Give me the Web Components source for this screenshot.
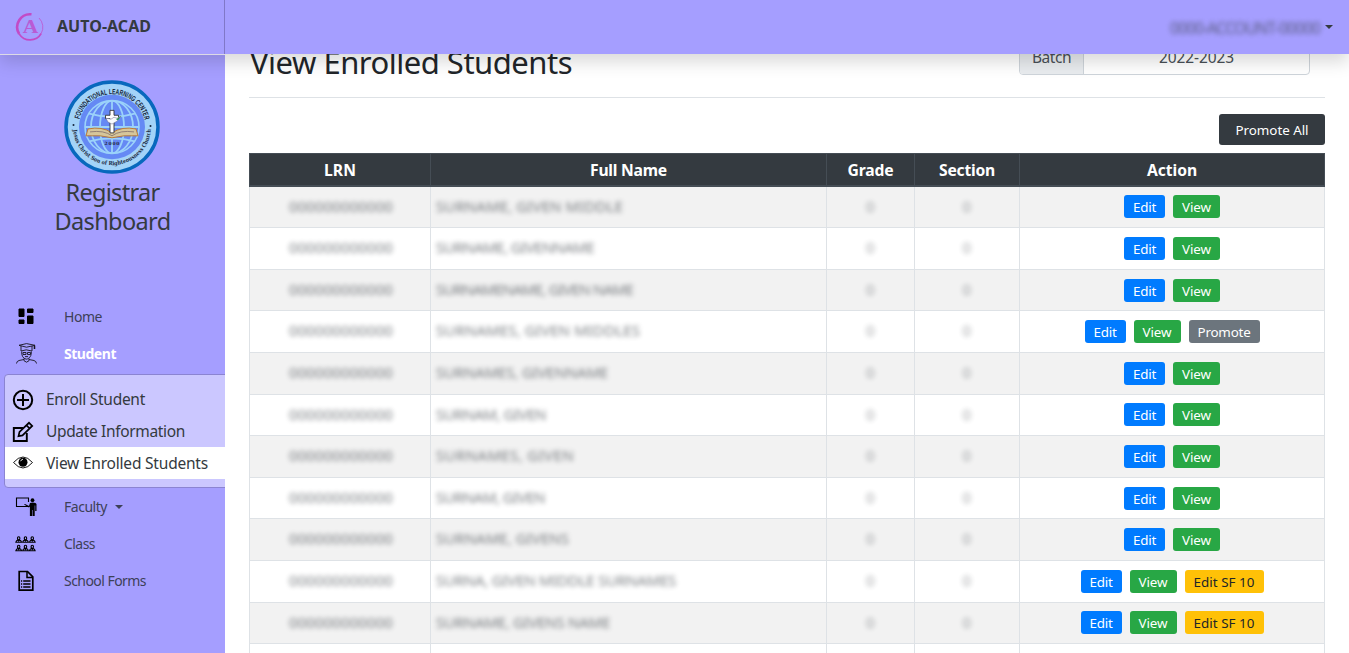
<!DOCTYPE html>
<html lang="en">
<head>
<meta charset="utf-8">
<title>AUTO-ACAD - View Enrolled Students</title>
<style>
html,body{margin:0;height:100%;overflow:hidden;background:#fff}
body{font-family:"Noto Sans","Open Sans",sans-serif;font-size:16px;line-height:1.5;color:#212529}
</style>
</head>
<body>
<app-shell></app-shell>
<script>
function define(name, html, setup) {
  const tpl = document.createElement('template');
  tpl.innerHTML = html;
  customElements.define(name, class extends HTMLElement {
    connectedCallback() {
      if (this.shadowRoot) return;
      const root = this.attachShadow({ mode: 'open' });
      root.appendChild(tpl.content.cloneNode(true));
      if (setup) setup(this, root);
    }
  });
}

// Text run tracked to a given width (attribute w, px).
define('fit-text', `<style>
:host{display:inline-block;white-space:nowrap;text-align:left}
span{display:inline-block;white-space:pre}
:host([masked]){filter:blur(2.6px);color:#343a40;opacity:.65}
</style><span><slot></slot></span>`, (el, root) => {
  const w = parseFloat(el.getAttribute('w'));
  const s = root.querySelector('span');
  const n = el.textContent.length;
  s.style.letterSpacing = '0px';
  const natural = s.getBoundingClientRect().width;
  if (n && natural) s.style.letterSpacing = (w - natural) / n + 'px';
  el.style.width = w + 'px';
});

const ICONS = {
  home: `<path d="M4 3h5v7.500H4zM12.500 3H18v3.500h-5.500zM4 14h5v3.500H4zM12.500 10H18v7.500h-5.500z" fill="#000" stroke="#000" stroke-linejoin="round"/>`,
  student: `<g fill="none" stroke="#17151f" stroke-width=".9"><path d="M4 2.300 11.500 .6l8.500 1.700-8.500 1.900zM6 3v5q5-2.300 11 0V3M6.700 8.600c-.2 4 1.200 6.900 4.600 7.600 3.700-.7 5.200-3.600 5-7.600M8 9.500h3v2H8zM12.500 9.500h3v2h-3zM10 13.600h3M9 15.500v2.200l2.500 1.500 2.500-1.500v-2.200M9 16.500 4 17.500q-2.300.7-2.500 3M14 16.500l5 1q2.300.7 2.500 3"/><path d="M19.500 2.500v3.500" stroke-width="1.500"/></g>`,
  plus: `<g fill="none" stroke="#000" stroke-width="2"><circle cx="11" cy="11" r="9.200"/><path d="M11 5v12M5 11h12"/></g>`,
  edit: `<g fill="none" stroke="#000" stroke-width="1.900"><path d="M11 7H1.800v13h13v-8"/><path d="m6.500 15.200 1-4.200L17 1.800l3.200 3.100-9.700 9.500zM14.500 4.300l3.200 3.200" stroke-width="1.700"/></g>`,
  eye: `<g fill="none" stroke="#000"><path d="M1.500 10.500Q11-.5 20.500 10.500 11 21.500 1.500 10.500z" stroke-width=".9"/><circle cx="11" cy="10.200" r="4.500" fill="#000" stroke="none"/><path d="M8.700 9.200q.5-1.800 2.300-2" stroke="#fff" stroke-width=".9"/></g>`,
  faculty: `<path d="M13 10.500H1.500V2h12v4" fill="none" stroke="#000" stroke-width="1.100"/><circle cx="17.500" cy="4.200" r="1.900"/><path d="m10 8 4 2 1-3q2.500-.8 5.500 0l1 1v7h-1.300V9.500h-.5V20h-2v-6h-.5v6h-2.300v-9.500l-1 1L9 8.600z"/>`,
  group: `<defs><g id="p" fill="none" stroke="#000" stroke-width="1.100"><path d="M2.500 2.300q0-1.600 1.200-1.600t1.200 1.600-1.200 1.600-1.200-1.600zM.9 6.200q.3-1.500 1.900-2.200l.9.900.9-.9q1.600.7 1.900 2.200z"/></g></defs><use href="#p" y="3"/><use href="#p" x="6.800" y="3"/><use href="#p" x="13.600" y="3"/><use href="#p" y="11.500"/><use href="#p" x="6.800" y="11.500"/><use href="#p" x="13.600" y="11.500"/>`,
  doc: `<path d="M4.200 1.500h8.300l5.300 5.300v13.400H4.200z" fill="none" stroke="#000" stroke-width="1.700"/><path d="M12 2v5.500h5.500M6 11h1.200m1 0h7.300M6 14h1.200m1 0h7.300M6 17h1.200m1 0h7.300" fill="none" stroke="#000" stroke-width="1.500"/>`
};
define('app-icon', `<style>:host{display:block;width:22px;height:22px;flex:none}svg{display:block;width:22px;height:22px}</style><svg viewBox="0 0 22 22"></svg>`,
  (el, root) => { root.querySelector('svg').innerHTML = ICONS[el.getAttribute('name')]; });

function addIcon(el, root) {
  const icon = document.createElement('app-icon');
  icon.setAttribute('name', el.getAttribute('icon'));
  root.querySelector('.l').before(icon);
}

define('brand-mark', `<style>:host{display:block;width:30px;height:30px}svg{display:block}text{font:bold 18px "Liberation Serif",serif}</style>
<svg width="30" height="30" viewBox="0 0 30 30"><g fill="none" stroke="#c24bc6"><path d="M16.500 2.300A12.900 12.900 0 0 0 4.200 22" stroke-width="2.600"/><path d="M4.200 22A12.900 12.900 0 0 0 26.200 21.500" stroke-width="1.600"/><path d="M26.200 21.500A12.900 12.900 0 0 0 24 6" stroke-width=".7"/></g><text x="15.500" y="20.500" text-anchor="middle" fill="#b95bd4" textLength="15.500" lengthAdjust="spacingAndGlyphs">A</text></svg>`);

define('school-seal', `<style>:host{display:block;width:96px;height:94px}svg{display:block}</style>
<svg width="96" height="94" viewBox="0 0 96 96" preserveAspectRatio="none">
<defs><path id="top" d="M14.500 48a33.500 33.500 0 0 1 67 0"/><path id="bot" d="M9 48a39 39 0 0 0 78 0"/><clipPath id="c"><circle cx="48" cy="48" r="27"/></clipPath></defs>
<circle cx="48" cy="48" r="46" fill="#a3d3f8" stroke="#0868bd" stroke-width="3.500"/>
<circle cx="48" cy="48" r="33" fill="#6589f4"/>
<circle cx="48" cy="48" r="27" fill="#6589f4" stroke="#9bd2fa" stroke-width="1.600"/>
<g clip-path="url(#c)" fill="none" stroke="#9bd2fa" stroke-width="1.800"><path d="M48 20v56M20 48h56M24 34q24 7 48 0M24 63q24-7 48 0"/><ellipse cx="48" cy="48" rx="12" ry="27"/><ellipse cx="48" cy="48" rx="21" ry="27"/></g>
<path d="M24 50q14-3 24 4 10-7 24-4l2 7q-15-1-26 2-11-3-26-2z" fill="#d6c69a" stroke="#bb7c35" stroke-width="1"/>
<path d="M26 53q14-2 22 4 8-6 22-4" fill="none" stroke="#806d69" stroke-width=".8"/>
<path d="M46 31h4v5h4.500v3.500H50V54h-4V39.500h-4.500V36H46z" fill="#fff" stroke="#333" stroke-width=".9"/>
<path d="m42 39 5 1 3-2 3 1 4-2-4 5-5 3-4-2z" fill="#f7fafd" stroke="#668" stroke-width=".5"/><path d="m52 40 5-3-3 4z" fill="#269650"/>
<text x="48" y="66.500" text-anchor="middle" font-size="4.500" font-weight="700" font-family="DejaVu Serif,serif" textLength="15" fill="#26283d">2000</text>
<text font-family="Liberation Sans,sans-serif" font-size="7.800" font-weight="700" fill="#14233a"><textPath href="#top" startOffset="8" textLength="90" lengthAdjust="spacingAndGlyphs">FOUNDATIONAL LEARNING CENTER</textPath></text>
<text font-family="DejaVu Serif,serif" font-size="5.700" font-weight="700" fill="#1b2a42"><textPath href="#bot" startOffset="3" textLength="117" lengthAdjust="spacingAndGlyphs">Jesus Christ Son of Righteousness Church</textPath></text>
<circle cx="9.500" cy="46" r="1" fill="#14233a"/><circle cx="86.500" cy="47" r="1" fill="#14233a"/>
</svg>`);

define('drop-caret', `<style>:host{display:block;width:0;height:0;border:4.500px solid transparent;border-top-color:currentColor;border-bottom:0}</style>`);

define('top-bar', `<style>
:host{display:flex;justify-content:space-between;height:54px;background:#a59eff;box-shadow:0 8px 16px rgba(0,0,0,.15);position:relative;z-index:5;flex:none;color:#343a40}
.brand{display:flex;align-items:center;box-sizing:border-box;width:225px;padding-left:15px;gap:12px;border-right:1px solid #8078c8;font-weight:700;font-size:16px;box-shadow:0 1px 0 #dcdae6}
.brand fit-text{margin-top:-3px}
.user{display:flex;align-items:center;gap:5px;padding-right:16px;color:#343a40}
.user fit-text{margin-top:2px}
</style><div class="brand"><brand-mark></brand-mark><fit-text w="94">AUTO-ACAD</fit-text></div>
<div class="user"><fit-text masked w="150">0000-ACCOUNT-00000</fit-text><drop-caret></drop-caret></div>`);

define('nav-item', `<style>
:host{display:flex;align-items:center;height:37px;padding-left:15px;font-size:14px;color:#3d4058}
:host([active]){color:#fff;font-weight:700}
.l{margin-left:27px;display:flex;align-items:center;gap:8px}
</style><div class="l"><slot></slot></div>`, addIcon);

define('sub-item', `<style>
:host{display:flex;align-items:center;box-sizing:border-box;height:32px;padding:1px 0 0 7px;font-size:15.500px;color:#343a40}
.l{margin-left:12px;padding-top:1px}
:host([current]){background:#fff}
:host([current]) app-icon{margin-top:-1px}
</style><div class="l"><slot></slot></div>`, addIcon);

define('side-bar', `<style>
:host{display:block;box-sizing:border-box;width:225px;flex:none;background:#a59eff;overflow:hidden}
school-seal{margin:0 auto;position:relative;left:-.5px}
.title{display:flex;flex-direction:column;align-items:center;font-size:23.500px;line-height:29px;color:#343a40;padding-top:4px;height:124px;box-sizing:border-box}
.sub{margin:2px -6px 0 4px;padding:8px 0;background:#cbc7ff;border:1px solid #8b84d2;border-radius:4px}
</style>
<school-seal></school-seal>
<div class="title"><fit-text w="94">Registrar</fit-text><fit-text w="116">Dashboard</fit-text></div>
<nav>
<nav-item icon="home"><fit-text w="38">Home</fit-text></nav-item>
<nav-item icon="student" active><fit-text w="52">Student</fit-text></nav-item>
<div class="sub">
<sub-item icon="plus"><fit-text w="99">Enroll Student</fit-text></sub-item>
<sub-item icon="edit"><fit-text w="139">Update Information</fit-text></sub-item>
<sub-item icon="eye" current><fit-text w="162">View Enrolled Students</fit-text></sub-item>
</div>
<nav-item icon="faculty"><fit-text w="43">Faculty</fit-text><drop-caret></drop-caret></nav-item>
<nav-item icon="group"><fit-text w="31">Class</fit-text></nav-item>
<nav-item icon="doc"><fit-text w="82">School Forms</fit-text></nav-item>
</nav>`);

define('ui-button', `<style>
:host{display:flex;align-items:center;justify-content:center;box-sizing:border-box;height:23px;border-radius:3px;font-size:13.400px;line-height:21px;color:#fff;background:#007bff;padding-top:1px}
:host([kind=view]){background:#28a745}
:host([kind=promote]){background:#6c757d}
:host([kind=sf]){background:#ffc107;color:#212529}
:host([kind=dark]){background:#343a40;height:31px;padding-top:2px}
</style><slot></slot>`);

const BUTTONS = {
  edit: ['Edit', 41, 23], view: ['View', 47, 29], promote: ['Promote', 71, 53], sf: ['Edit SF 10', 79, 61]
};
const button = k => { const [t, w, tw] = BUTTONS[k]; return `<ui-button kind="${k}" style="width:${w}px"><fit-text w="${tw}">${t}</fit-text></ui-button>`; };

define('student-row', `<style>
:host{display:grid;grid-template-columns:181px 396px 88px 105px 306px;box-sizing:border-box;border-bottom:1px solid #dee2e6;font-size:15px;line-height:21px}
:host([odd]){background:#f2f2f2}
div{border-left:1px solid #dee2e6;text-align:center;padding-top:9px;overflow:hidden}
.n{text-align:left;padding-left:5px}
.l{padding-left:2px}
.a{display:flex;justify-content:center;align-items:flex-start;gap:8px;border-right:1px solid #dee2e6}
</style><div class="l"></div><div class="n"></div><div class="g"></div><div class="c"></div><div class="a"></div>`, (el, root) => {
  const [h, top, nw, name, acts] = el.data;
  const q = s => root.querySelector(s);
  el.style.height = h + 'px';
  q('.a').style.paddingTop = top + 'px';
  if (nw) {
    q('.l').innerHTML = '<fit-text masked w="104">000000000000</fit-text>';
    q('.n').innerHTML = `<fit-text masked w="${nw}">${name}</fit-text>`;
    q('.g').innerHTML = q('.c').innerHTML = '<fit-text style="opacity:.45" masked w="9">0</fit-text>';
  }
  q('.a').innerHTML = acts.map(button).join('');
});

define('student-table', `<style>
:host{display:block}
.head{display:grid;grid-template-columns:181px 396px 88px 105px 306px;box-sizing:border-box;height:34px;background:#343a40;color:#fff;font-weight:700;font-size:15.700px;line-height:32px;border-top:1px solid #454d55;border-bottom:2px solid #454d55}
.head div{border-left:1px solid #454d55;display:flex;align-items:center;justify-content:center;height:31px;padding-top:1px;box-sizing:border-box}
.head div:last-child{border-right:1px solid #454d55}
</style>
<div class="head"><div><fit-text w="32">LRN</fit-text></div><div><fit-text w="77">Full Name</fit-text></div><div><fit-text w="46">Grade</fit-text></div><div><fit-text w="56">Section</fit-text></div><div><fit-text w="50">Action</fit-text></div></div>`, (el, root) => {
  const ev = ['edit', 'view'];
  // height, action offset, name width, masked name, actions
  const rows = [
    [41, 8, 187, 'SURNAME, GIVEN MIDDLE', ev],
    [42, 9, 158, 'SURNAME, GIVENNAME', ev],
    [41, 9, 197, 'SURNAMENAME, GIVEN NAME', ev],
    [42, 9, 204, 'SURNAMES, GIVEN MIDDLES', [...ev, 'promote']],
    [42, 9, 172, 'SURNAMES, GIVENNAME', ev],
    [41, 8, 110, 'SURNAM, GIVEN', ev],
    [42, 9, 138, 'SURNAMES, GIVEN', ev],
    [41, 9, 109, 'SURNAM, GIVEN', ev],
    [42, 9, 133, 'SURNAME, GIVENS', ev],
    [42, 9, 240, 'SURNA, GIVEN MIDDLE SURNAMES', [...ev, 'sf']],
    [41, 8, 174, 'SURNAME, GIVENS NAME', [...ev, 'sf']],
    [42, 9, 0, '', []]
  ];
  rows.forEach((d, i) => {
    const r = document.createElement('student-row');
    r.data = d;
    if (i % 2 === 0 && i < 11) r.setAttribute('odd', '');
    root.appendChild(r);
  });
});

define('batch-picker', `<style>
:host{display:flex;box-sizing:border-box;width:291px;height:38px;border:1px solid #ced4da;border-radius:4px;overflow:hidden;color:#495057;font-size:15.500px;line-height:39px}
.k{box-sizing:border-box;width:64px;background:#e9ecef;border-right:1px solid #ced4da;text-align:center}
.v{flex:1;text-align:center}
</style><div class="k"><fit-text w="39">Batch</fit-text></div><div class="v"><fit-text w="75">2022-2023</fit-text></div>`);

define('main-panel', `<style>
:host{display:block;flex:1;min-width:0;box-sizing:border-box;padding:0 24px;margin-top:-18px;background:#fff}
.t{display:flex;justify-content:space-between;height:60px;border-bottom:1px solid #dee2e6;padding-right:15px}
h2{margin:6px 0 0 1px;font-weight:400;font-size:31px;line-height:38px}
.b{display:flex;justify-content:flex-end;padding:16px 0 8px}
</style>
<div class="t"><h2><fit-text w="322">View Enrolled Students</fit-text></h2><batch-picker></batch-picker></div>
<div class="b"><ui-button kind="dark" style="width:106px"><fit-text w="73">Promote All</fit-text></ui-button></div>
<student-table></student-table>`);

define('app-shell', `<style>
:host{display:flex;flex-direction:column;height:653px;overflow:hidden}
.body{display:flex;flex:1;min-height:0;padding-top:1px;margin-bottom:-100px}
side-bar{margin-top:-1px;padding-top:26px}
</style><top-bar></top-bar><div class="body"><side-bar></side-bar><main-panel></main-panel></div>`);
</script>
</body>
</html>
